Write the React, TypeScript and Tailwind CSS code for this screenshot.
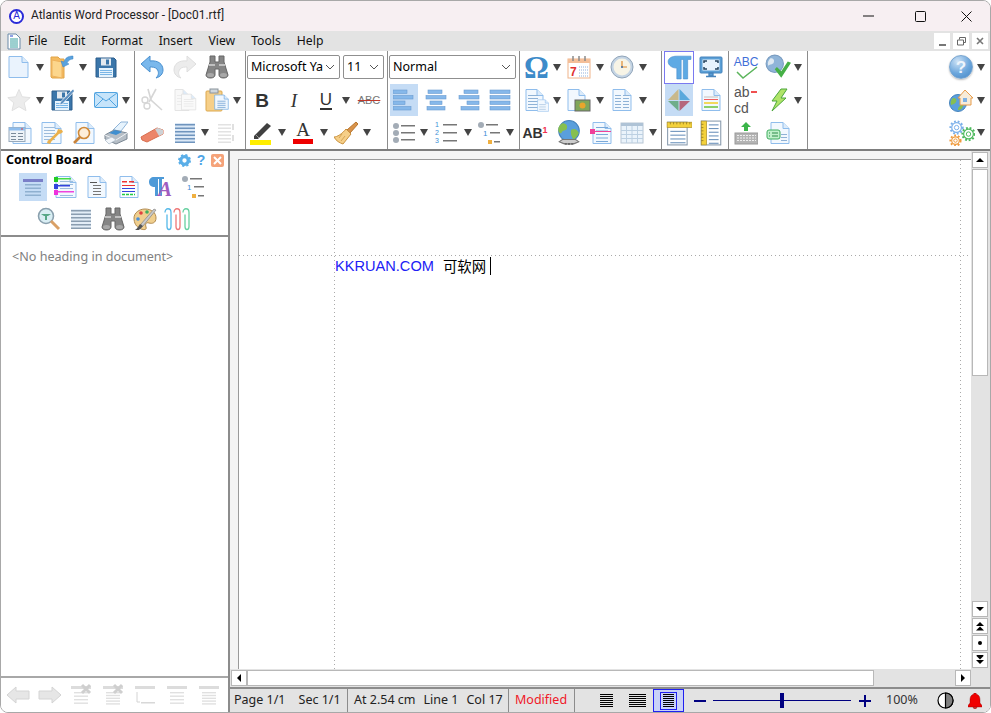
import type { ReactNode } from "react"

const font = "font-['Noto_Sans','Noto_Sans_CJK_SC',sans-serif]"

function Arrow({ className = "w-[8px]" }: { className?: string }) {
  return (
    <span className={`flex shrink-0 justify-center ${className}`}>
      <svg className="shrink-0" width="8" height="7" viewBox="0 0 8 7">
        <path d="M0 0h8L4 7z" fill="#444" />
      </svg>
    </span>
  )
}

function Slot({ className, children }: { className: string; children?: ReactNode }) {
  return <span className={`flex h-full shrink-0 items-center justify-center ${className}`}>{children}</span>
}

function Svg({ children, size = 24, box = 24 }: { children: ReactNode; size?: number; box?: number }) {
  return (
    <svg className="shrink-0" width={size} height={size} viewBox={`0 0 ${box} ${box}`} fill="none">
      {children}
    </svg>
  )
}

// sheet of paper with a folded corner, the base of most toolbar icons
function Sheet({ x = 4, w = 17, fill = "#f2f8fe", stroke = "#8fbdec", op = 1, children }: { x?: number; w?: number; fill?: string; stroke?: string; op?: number; children?: ReactNode }) {
  const r = x + w
  return (
    <g opacity={op}>
      <path d={`M${x} 1.500h${w - 6}l6 6v15h-${w}z`} fill={fill} stroke={stroke} />
      <path d={`M${r - 6} 1.500v6h6`} fill="#dcebfa" stroke={stroke} />
      {children}
    </g>
  )
}

function Lines({ x, y, w, n, gap = 3, color = "#8fb2d6", h = 1 }: { x: number; y: number; w: number; n: number; gap?: number; color?: string; h?: number }) {
  return (
    <>
      {Array.from({ length: n }).map((_, i) => (
        <rect key={i} x={x} y={y + i * gap} width={w} height={h} fill={color} />
      ))}
    </>
  )
}

const NewDoc = () => <Svg><Sheet x={2} w={19} fill="#eaf3fd" /></Svg>
const Folder = () => (
  <Svg>
    <path d="M1 2h7l2 2h4v19H2l-1-1z" fill="#f5bb60" stroke="#e0a548" />
    <path d="M2 5l10 2v16L2 21z" fill="#fcd68c" stroke="#eeb25c" />
    <path d="M23 1c-5 0-8 2-9 6l-3-1 2 6 6-3-2-1c1-2 3-4 6-4z" fill="#5aa2de" stroke="#3f85c0" strokeWidth=".5" />
  </Svg>
)
const Floppy = ({ pen = false }: { pen?: boolean }) => (
  <Svg>
    <path d="M2 3h18l2 2v17H2z" fill="#3b76aa" stroke="#2a5c8c" />
    <rect x="7" y="3.500" width="10" height="7" fill="#e4eaf0" />
    <rect x="12" y="4.500" width="3" height="5" fill="#3b76aa" />
    <rect x="5" y="13" width="14" height="9" fill="#e6f3fd" />
    <Lines x={6} y={15} w={12} n={3} gap={2} color="#79b5e6" />
    {pen && <path d="M23 1l1.500 2-12 13-3 1 1-3z" fill="#5c8fc0" stroke="#fff" strokeWidth=".7" />}
  </Svg>
)
const Star = () => (
  <Svg><path d="M12 1.500l3.200 7.300 8 .8-6 5.300 1.800 7.800-7-4-7 4 1.800-7.800-6-5.300 8-.8z" fill="#ececec" stroke="#e0e0e0" /></Svg>
)
const Mail = () => (
  <Svg>
    <rect x=".5" y="4.500" width="23" height="15" rx="1" fill="#c6e4fa" stroke="#52a4e0" />
    <path d="M1 5l11 8 11-8M1 19l8-8M23 19l-8-8" stroke="#52a4e0" fill="none" />
  </Svg>
)
const Preview = () => (
  <Svg>
    <Sheet x={5} w={18} />
    <rect x="1" y="6.500" width="16" height="14" fill="#eef3f8" stroke="#98aabb" />
    <rect x="1" y="6.500" width="16" height="3" fill="#8fbdec" />
    <rect x="13" y="7.500" width="2" height="1" fill="#e04040" />
    <Lines x={3} y={12} w={5} n={3} color="#7a8a9a" />
    <Lines x={10} y={12} w={5} n={3} color="#7a8a9a" />
  </Svg>
)
const DocTool = () => (
  <Svg>
    <Sheet x={2} w={19}><Lines x={4} y={6} w={11} n={5} color="#9dbcdc" /></Sheet>
    <path d="M19 11L9 21" stroke="#eab04c" strokeWidth="2.500" />
    <path d="M18 8l4 1 1 2-3 2-3-2zM10 23l-3-1 1-3 3 2z" fill="#eab04c" />
  </Svg>
)
const DocSearch = () => (
  <Svg>
    <Sheet x={4} w={18} />
    <circle cx="12" cy="12" r="5.500" fill="#fdeeda" stroke="#d08a3a" strokeWidth="1.600" />
    <path d="M8 16l-6 6" stroke="#c9833a" strokeWidth="2.600" />
  </Svg>
)
const Printer = () => (
  <Svg>
    <path d="M9 9l8-8h7l-7 9z" fill="#e6f3fd" stroke="#8fb4d8" />
    <path d="M1 14l9-5 13 3v6l-11 5-11-5z" fill="#b6bec6" stroke="#7c8894" />
    <path d="M1 14l11 5 11-7" stroke="#eef1f4" />
    <path d="M5 12l6-3 7 2-6 3z" fill="#3f8fd0" />
    <path d="M1 19l7-3 4 3-7 4z" fill="#f2f6fa" stroke="#a8b6c4" strokeWidth=".7" />
  </Svg>
)
const Undo = ({ gray = false }: { gray?: boolean }) => (
  <Svg>
    <path
      d="M1 9l9-8v5c8-1 13 3 13 9 0 4-3 7-7 8 3-3 3-6 1-9-2-2-5-2-7-2v5z"
      fill={gray ? "#ececec" : "#7ab8ec"}
      stroke={gray ? "#dedede" : "#4a90cf"}
      transform={gray ? "matrix(-1 0 0 1 24 0)" : undefined}
    />
  </Svg>
)
const Binoculars = () => (
  <Svg>
    <path d="M5 1h5v6h4V1h5v6l4 13c0 2-2 3-4.500 3S14 22 14 20v-6h-4v6c0 2-2 3-4.500 3S1 22 1 20L5 7z" fill="#858585" stroke="#666" />
    <path d="M4 10h6M14 10h6" stroke="#c0c0c0" strokeWidth="2" />
    <ellipse cx="5.500" cy="20" rx="3.500" ry="2" fill="#a8a8a8" />
    <ellipse cx="18.500" cy="20" rx="3.500" ry="2" fill="#a8a8a8" />
  </Svg>
)
const Scissors = () => (
  <Svg>
    <path d="M8 1l3 11 11 10" stroke="#d6d6d6" strokeWidth="1.600" />
    <path d="M16 1L9 14" stroke="#d6d6d6" strokeWidth="1.600" />
    <circle cx="5" cy="12" r="3" stroke="#d6d6d6" strokeWidth="1.400" />
    <circle cx="7" cy="18" r="3" stroke="#d6d6d6" strokeWidth="1.400" />
  </Svg>
)
const Copy = () => (
  <Svg>
    <Sheet x={2} w={14} fill="#f8f8f8" stroke="#e4e4e4"><Lines x={4} y={7} w={8} n={4} color="#ececec" /></Sheet>
    <g transform="translate(7 5) scale(.75)"><Sheet x={2} w={19} fill="#fafafa" stroke="#e0e0e0"><Lines x={5} y={8} w={13} n={4} color="#e6e6e6" /></Sheet></g>
  </Svg>
)
const Paste = () => (
  <Svg>
    <rect x="1" y="3" width="16" height="20" rx="1" fill="#f6cf88" stroke="#dca84e" />
    <rect x="5" y="1" width="8" height="4" fill="#cfd6dc" stroke="#8a949c" />
    <g transform="translate(9 6) scale(.68)"><Sheet x={1} w={20} fill="#f0f7fe" stroke="#6fa8e0"><Lines x={5} y={10} w={12} n={4} color="#5c93cb" /></Sheet></g>
  </Svg>
)
const Eraser = () => (
  <Svg>
    <path d="M1 16L17 7l6 2v4L7 21l-5-2z" fill="#ec8569" stroke="#d96f50" />
    <path d="M15 8l3-1 5 2v4l-4 2z" fill="#cdd2d6" />
  </Svg>
)
const LinesBlock = ({ c = "#6f94bd", bg = "#dbe8f6" }: { c?: string; bg?: string }) => (
  <Svg>
    <rect x="2" y="2" width="20" height="20" fill={bg} />
    <Lines x={2} y={3} w={20} n={6} gap={3.500} h={1.500} color={c} />
  </Svg>
)
const BlockDisabled = () => (
  <Svg>
    <Lines x={3} y={3} w={13} n={6} gap={3.500} h={1.500} color="#e2e2e2" />
    <path d="M18 3v6M18 14v6" stroke="#e0e0e0" strokeWidth="2" />
  </Svg>
)
const TextGlyph = ({ children, className }: { children: ReactNode; className: string }) => <span className={`leading-none ${className}`}>{children}</span>
const Pen = () => (
  <Svg>
    <path d="M4 15L17 2l4 3L8 18H4z" fill="#404040" />
    <path d="M5 13l4 4" stroke="#999" />
    <rect x="0" y="19" width="21" height="5" fill="#ffee00" />
  </Svg>
)
const ColorA = () => (
  <span className="flex flex-col items-center">
    <span className="font-['Liberation_Serif',serif] text-[19px] leading-[18px] text-[#333]">A</span>
    <span className="h-[5px] w-[20px] bg-[#ee0000]" />
  </span>
)
const Brush = () => (
  <Svg>
    <path d="M22 1l2 2-8 9-3-3z" fill="#d9934a" stroke="#b5752f" />
    <path d="M12 8l5 5-8 10c-3-1-7-3-9-7 3 0 8-3 12-8z" fill="#f6cf88" stroke="#c9923f" />
    <path d="M8 13l-3 4M11 15l-4 5" stroke="#c9923f" strokeWidth=".7" />
  </Svg>
)
const AlignIcon = ({ rows }: { rows: [number, number][] }) => (
  <svg className="shrink-0" width="22" height="24" viewBox="0 0 22 24">
    {rows.map(([x, w], i) => (
      <rect key={i} x={x} y={2 + i * 5.500} width={w} height={3.500} fill="#86b8ea" stroke="#6a9bd0" strokeWidth=".6" />
    ))}
  </svg>
)
const Bullets = () => (
  <Svg>
    {[5, 12, 19].map((y) => (
      <g key={y}>
        <circle cx="4" cy={y} r="3" fill="#a3acb6" />
        <rect x="9" y={y - 1} width="14" height="1.500" fill="#777" />
      </g>
    ))}
  </Svg>
)
const Numbered = () => (
  <Svg>
    {[3, 11, 19].map((y, i) => (
      <g key={y}>
        <text x="1" y={y + 2.500} fontSize="7" fill="#3d8fd6" fontFamily="Liberation Sans">{i + 1}</text>
        <rect x="9" y={y} width="14" height="1.500" fill="#777" />
      </g>
    ))}
  </Svg>
)
const MultiList = () => (
  <Svg>
    <circle cx="4" cy="4" r="3" fill="#a3acb6" />
    <rect x="9" y="3" width="12" height="1.500" fill="#777" />
    <text x="6" y="15" fontSize="8" fill="#3d8fd6" fontFamily="Liberation Sans">1</text>
    <rect x="13" y="11" width="10" height="1.500" fill="#777" />
    <rect x="11" y="19" width="4" height="4" fill="#f0b040" />
    <rect x="17" y="20" width="6" height="1.500" fill="#777" />
  </Svg>
)
const Calendar = () => (
  <Svg>
    <rect x="1" y="4" width="22" height="19" fill="#fff" stroke="#efb48a" />
    <rect x="1" y="4" width="22" height="4" fill="#f4bf99" />
    <path d="M6 1v5M12 1v5M18 1v5" stroke="#8a8a8a" strokeWidth="1.500" />
    <text x="3" y="21" fontSize="12" fontWeight="700" fill="#e03030" fontFamily="Liberation Sans">7</text>
    <path d="M12 12h9M12 15h9M12 18h9M12 21h9" stroke="#8fb0dc" strokeDasharray="1 1" />
  </Svg>
)
const Clock = () => (
  <Svg>
    <circle cx="12" cy="12" r="11" fill="#c4d4e4" stroke="#90a4b8" />
    <circle cx="12" cy="12" r="8.500" fill="#f7f4e6" />
    <path d="M12 6v6h5" stroke="#e08a30" strokeWidth="1.200" />
    <circle cx="12" cy="12" r="1" fill="#3d6fa8" />
  </Svg>
)
const DocCopy = () => (
  <Svg>
    <Sheet x={1} w={17}><Lines x={3} y={7} w={10} n={5} /></Sheet>
    <g transform="translate(12 11) scale(.55)"><Sheet x={1} w={20}><Lines x={4} y={10} w={12} n={3} gap={4} /></Sheet></g>
  </Svg>
)
const DocPicture = () => (
  <Svg>
    <Sheet x={1} w={17} />
    <rect x="8" y="12" width="15" height="11" fill="#7fa65a" stroke="#666" />
    <circle cx="15.500" cy="17.500" r="3" fill="#e8a52c" />
  </Svg>
)
const DocColumns = () => (
  <Svg>
    <Sheet x={3} w={18}>
      <Lines x={5} y={7} w={6} n={5} />
      <Lines x={13} y={7} w={6} n={5} />
    </Sheet>
  </Svg>
)
const Globe = () => (
  <Svg size={26}>
    <circle cx="12" cy="10" r="9.500" fill="#5a9fdc" stroke="#4684bc" />
    <path d="M6 3c3 0 5 2 4 5-1 2-4 1-5 4-1 1-3-1-3-3 0-3 2-5 4-6zM14 9c3-2 6 0 7 3-1 3-3 5-5 6-1-2-3-5-2-9z" fill="#86bf50" />
    <path d="M3 20c5 3 13 3 18 0l-3-2H6z" fill="#ccc" stroke="#777" />
    <path d="M8 22h8" stroke="#666" strokeWidth="1.500" strokeDasharray="2 1" />
  </Svg>
)
const BreakDoc = () => (
  <Svg>
    <Sheet x={4} w={18}><Lines x={7} y={6} w={12} n={5} gap={3.500} color="#7aa9d8" /></Sheet>
    <rect x="1" y="8" width="5" height="5" fill="#f0409a" />
    <rect x="5" y="10" width="17" height="1" fill="#f0409a" />
  </Svg>
)
const TableIcon = () => (
  <Svg>
    <rect x="1" y="2" width="22" height="20" fill="#eaf3fb" stroke="#b8c6d4" />
    <rect x="1" y="2" width="22" height="3" fill="#afc3d6" />
    <path d="M1 9.500h22M1 13.500h22M1 17.500h22M6.500 5v17M12 5v17M17.500 5v17" stroke="#bcd0e2" />
  </Svg>
)
const Pilcrow = () => (
  <Svg size={26}>
    <path d="M10 2h13v3h-3v18h-4V5h-2v18h-4V13c-5 0-8-3-8-6s3-5 8-5z" fill="#5eaae4" stroke="#4a90cf" strokeWidth=".6" />
  </Svg>
)
const Screen = () => (
  <Svg>
    <rect x="1" y="2" width="22" height="16" rx="1" fill="#5a9fd6" stroke="#4684bc" />
    <rect x="3.500" y="4.500" width="17" height="11" fill="#e8f3fc" />
    <path d="M5 8V6h3M16 6h3v2M19 12v2h-3M8 14H5v-2" stroke="#26445e" strokeWidth="1.500" />
    <path d="M10 18h4v3h-4zM7 21.500h10" stroke="#4684bc" strokeWidth="1.300" fill="#5a9fd6" />
  </Svg>
)
const Diamond = () => (
  <Svg>
    <path d="M11.500 1v11H1z" fill="#c9b98c" />
    <path d="M12.500 1v11H23z" fill="#5aa8dc" />
    <path d="M1 13h10.500v10z" fill="#6fae8a" />
    <path d="M23 13H12.500v10z" fill="#b5667d" />
  </Svg>
)
const DocHighlight = () => (
  <Svg>
    <Sheet x={3} w={18}>
      <rect x="5" y="8" width="14" height="2" fill="#dcdcdc" />
      <rect x="5" y="11" width="14" height="1" fill="#f06060" />
      <rect x="5" y="14" width="14" height="2" fill="#f2d95c" />
      <rect x="5" y="18" width="14" height="2" fill="#8bd06a" />
    </Sheet>
  </Svg>
)
const RulerTop = () => (
  <Svg size={26}>
    <rect x="1.500" y="2" width="18" height="21" fill="#fff" stroke="#8a9cae" />
    <Lines x={4} y={10} w={14} n={4} gap={3.500} color="#6d93bc" />
    <rect x="1" y="2" width="23" height="5" fill="#f3d13c" stroke="#a88d2a" strokeWidth=".6" />
    <path d="M4 2v2M7 2v2M10 2v2M13 2v2M16 2v2M19 2v2M22 2v2" stroke="#8a7220" strokeWidth=".7" />
  </Svg>
)
const RulerSide = () => (
  <Svg size={26}>
    <rect x="3" y="1" width="18" height="22" fill="#fff" stroke="#8a9cae" />
    <Lines x={10} y={4} w={9} n={6} gap={3.400} color="#6d93bc" />
    <rect x="3" y="1" width="5" height="22" fill="#f3d13c" stroke="#a88d2a" strokeWidth=".6" />
    <path d="M3 4h2M3 7h2M3 10h2M3 13h2M3 16h2M3 19h2" stroke="#8a7220" strokeWidth=".7" />
  </Svg>
)
const Spell = () => (
  <span className="relative flex h-[24px] w-[24px] justify-center">
    <span className="font-['Liberation_Sans',sans-serif] text-[12px] leading-[14px] text-[#3f6fd8]">ABC</span>
    <svg className="absolute bottom-0 left-[2px]" width="22" height="13" viewBox="0 0 22 13" fill="none">
      <path d="M1 6l6 6L21 1" stroke="#5bb55b" strokeWidth="1.500" />
    </svg>
  </span>
)
const WebCheck = () => (
  <Svg size={26}>
    <circle cx="9" cy="9" r="8" fill="#8fb4d8" stroke="#7a9cc0" />
    <path d="M5 4c3 0 4 2 3 4s-4 1-5 3c-1-3 0-5 2-7z" fill="#dfe9f2" />
    <path d="M9 14l6 8L24 8l-3-1-6 9-4-4z" fill="#46b046" />
  </Svg>
)
const Hyphen = () => (
  <span className="flex w-[24px] flex-col font-['Liberation_Sans',sans-serif] text-[14px] leading-[16px] text-[#555]">
    <span className="flex items-center">ab<span className="ml-[1px] h-[2px] w-[6px] bg-[#f05050]" /></span>
    <span>cd</span>
  </span>
)
const Bolt = () => (
  <Svg>
    <path d="M15 1h6l-6 9h5L6 23l5-10H6z" fill="#b0e468" stroke="#4ca63c" />
  </Svg>
)
const Keyboard = () => (
  <Svg>
    <path d="M12 1l5 5h-3v4h-4V6H7z" fill="#3cb54a" />
    <rect x="1" y="12" width="23" height="11" fill="#b4b4b4" stroke="#9a9a9a" />
    {[14.500, 17, 19.500].map((y) => <path key={y} d="M3 0h19" transform={`translate(0 ${y})`} stroke="#eee" strokeDasharray="2 1" />)}
  </Svg>
)
const DocCard = () => (
  <Svg>
    <Sheet x={5} w={18}><Lines x={15} y={13} w={6} n={3} /></Sheet>
    <rect x="1" y="9" width="13" height="9" rx="2" fill="#c0f0ca" stroke="#3fae5e" />
    <path d="M3 12h1M3 15h1M6 12h6M6 15h6" stroke="#2c8a48" />
  </Svg>
)
const Help = () => (
  <span className="flex h-[24px] w-[24px] items-center justify-center rounded-full border border-[#7aa6d0] bg-[radial-gradient(circle_at_35%_25%,#cfe3f6,#6ba6dc_55%,#4384c4)] font-['Liberation_Sans',sans-serif] text-[17px] font-bold leading-none text-[#eef5fc] shadow-[0_1px_2px_#bbb]">?</span>
)
const HomeGlobe = () => (
  <Svg>
    <circle cx="9" cy="15" r="8.500" fill="#5a9fdc" stroke="#4684bc" />
    <path d="M4 10c3 0 4 2 3 4s-3 2-5 3c-1-3 0-5 2-7zM9 22c0-3 2-5 5-5 0 3-2 5-5 5z" fill="#86bf50" />
    <path d="M9 10l7-8 8 8h-2v7H11v-7z" fill="#f7ecd9" stroke="#e79c4a" />
    <rect x="14" y="10" width="4" height="4" fill="#7fb2e5" />
  </Svg>
)
const Gear = ({ cx, cy, r, c }: { cx: number; cy: number; r: number; c: string }) => (
  <g>
    <circle cx={cx} cy={cy} r={r + 1.200} stroke={c} strokeWidth="1.800" strokeDasharray="1.700 1.700" />
    <circle cx={cx} cy={cy} r={r} stroke={c} strokeWidth="1.100" fill="#fff" />
    <circle cx={cx} cy={cy} r={r * 0.45} stroke={c} strokeWidth=".9" fill="#fff" />
  </g>
)
const Gears = () => (
  <Svg size={26}>
    <Gear cx={7} cy={7} r={4.500} c="#7cb0ea" />
    <Gear cx={18} cy={13} r={4.500} c="#4cb85c" />
    <Gear cx={6} cy={19} r={3.500} c="#ef9a3c" />
  </Svg>
)

// control board icons
const PanelLines = () => (
  <Svg>
    <rect x="2" y="4" width="20" height="3" fill="#7a7fc8" />
    <Lines x={4} y={9} w={16} n={4} gap={3.500} h={1.500} color="#8fb0d0" />
  </Svg>
)
const ColorHeads = () => (
  <Svg>
    <Sheet x={3} w={20}>
      <rect x="1" y="3" width="17" height="1.500" fill="#44dd44" />
      <rect x="1" y="2" width="4" height="5" fill="#22cc22" />
      <rect x="1" y="10" width="16" height="1.500" fill="#3344dd" />
      <rect x="1" y="9" width="4" height="5" fill="#3344dd" />
      <rect x="1" y="16" width="20" height="1.500" fill="#ee44dd" />
      <rect x="1" y="15" width="4" height="5" fill="#ee33dd" />
      <Lines x={7} y={6} w={13} n={2} color="#9dbcdc" />
      <Lines x={7} y={13} w={13} n={1} color="#9dbcdc" />
      <Lines x={7} y={20} w={13} n={1} color="#9dbcdc" />
    </Sheet>
  </Svg>
)
const DocOutline = () => (
  <Svg>
    <Sheet x={3} w={18}>
      <Lines x={5} y={7} w={7} n={1} color="#555" />
      <Lines x={8} y={10} w={8} n={4} gap={3} color="#777" />
    </Sheet>
  </Svg>
)
const DocColor = () => (
  <Svg>
    <Sheet x={3} w={18} fill="#fafcff">
      <rect x="5" y="6" width="5" height="1.500" fill="#ee3333" />
      <rect x="12" y="6" width="5" height="1.500" fill="#ee3333" />
      <rect x="5" y="10" width="13" height="1" fill="#ee3333" />
      <rect x="5" y="13" width="13" height="1" fill="#3344dd" />
      <rect x="5" y="16" width="13" height="1" fill="#3344dd" />
      <path d="M5 19.500h13" stroke="#22cc44" strokeWidth="1.500" strokeDasharray="3 1" />
    </Sheet>
  </Svg>
)
const StyleA = () => (
  <span className="relative flex h-[24px] w-[24px] items-center justify-center">
    <svg className="absolute left-0 top-[1px]" width="16" height="22" viewBox="0 0 16 22">
      <path d="M5 1h10v2h-2v17h-3V3H9v17H6V11C2 11 0 9 0 6s2-5 5-5z" fill="#4d9ad8" />
    </svg>
    <span className="relative left-[4px] top-[2px] font-['Liberation_Serif',serif] text-[21px] font-bold italic leading-none text-[#a05cc0]">A</span>
  </span>
)
const MagnifyHead = () => (
  <Svg>
    <circle cx="9" cy="9" r="7.500" fill="#d9eef4" stroke="#8aa0ae" strokeWidth="1.600" />
    <path d="M4 7h10l-3 2H7zM8 9h2v4H8z" fill="#58a888" />
    <path d="M14 14l8 8" stroke="#d9a066" strokeWidth="3" />
  </Svg>
)
const Palette = () => (
  <Svg>
    <path d="M12 2c7 0 11 4 11 9s-4 6-7 5-4 1-3 4-2 3-5 2C3 20 1 16 1 11S6 2 12 2z" fill="#f0cf8e" stroke="#b08a50" />
    <circle cx="8" cy="6" r="1.800" fill="#e04040" />
    <circle cx="14" cy="5" r="1.800" fill="#3fae5e" />
    <circle cx="5" cy="12" r="1.800" fill="#4a8fd8" />
    <path d="M23 3L10 19l-3 3 1-5L21 2z" fill="#c9c9c9" stroke="#777" strokeWidth=".6" />
    <path d="M7 17l3 2-4 4H2c2-1 3-3 5-6z" fill="#555" />
  </Svg>
)
const Clips = () => (
  <svg className="shrink-0" width="26" height="24" viewBox="0 0 26 24" fill="none" strokeWidth="1.300">
    {[
      { c: "#55b8e8", x: 1 },
      { c: "#ee7777", x: 10 },
      { c: "#66d0a0", x: 19 },
    ].map(({ c, x }) => (
      <path key={x} d={`M${x} 5c0-5 6-5 6 0v14c0 4-4 4-4 0V7`} stroke={c} transform="translate(0 .5)" />
    ))}
  </svg>
)

// grey arrows and heading tools of the bottom strip
const BigArrow = ({ flip = false }: { flip?: boolean }) => (
  <svg className="shrink-0" width="24" height="20" viewBox="0 0 24 20">
    <path d="M1 10l9-8v4h13v8H10v4z" fill="#e6e6e6" stroke="#d4d4d4" transform={flip ? "matrix(-1 0 0 1 24 0)" : undefined} />
  </svg>
)
const GrayHead = ({ x = false, fat = false, hook = false }: { x?: boolean; fat?: boolean; hook?: boolean }) => (
  <Svg>
    <rect x="1" y="3" width="20" height="3" fill="#dcdcdc" />
    {hook ? (
      <>
        <path d="M3 9v10h3" stroke="#d4d4d4" fill="none" />
        <rect x="7" y="19" width="14" height="1.500" fill="#d8d8d8" />
      </>
    ) : (
      <Lines x={4} y={9} w={14} n={fat ? 5 : 4} gap={fat ? 2.800 : 3.500} h={1.400} color="#e0e0e0" />
    )}
    {x && <path d="M12 2l8 8M20 2l-8 8" stroke="#cfcfcf" strokeWidth="3" />}
  </Svg>
)

function ScrollButton({ children, className = "h-[16px] w-[16px]" }: { children: ReactNode; className?: string }) {
  return <span className={`flex shrink-0 items-center justify-center border border-[#b8b8b8] bg-white ${className}`}>{children}</span>
}

const Tri = ({ up = false, dir }: { up?: boolean; dir?: "l" | "r" }) => (
  <svg width="8" height="8" viewBox="0 0 8 8">
    <path d={dir === "l" ? "M6 0v8L2 4z" : dir === "r" ? "M2 0v8l4-4z" : up ? "M0 6h8L4 2z" : "M0 2h8L4 6z"} fill="#000" />
  </svg>
)
const DoubleTri = ({ up = false }: { up?: boolean }) => (
  <svg width="8" height="10" viewBox="0 0 8 10">
    <path d={up ? "M0 5h8L4 1zM0 9.500h8L4 5.500z M1 9h6v1H1z" : "M0 5h8L4 9zM0 .5h8L4 4.500z M1 0h6v1H1z"} fill="#000" />
  </svg>
)

function ToolGroup({ className, children }: { className: string; children: ReactNode }) {
  return <div className={`flex shrink-0 flex-col border-r border-[#8c8c8c] ${className}`}>{children}</div>
}

function Row({ children, className = "" }: { children: ReactNode; className?: string }) {
  return <div className={`flex h-[33px] items-center ${className}`}>{children}</div>
}

function Combo({ value, className }: { value: string; className: string }) {
  return (
    <span className={`flex h-[24px] shrink-0 items-center justify-between overflow-hidden rounded-[2px] border border-[#8f8f8f] bg-white pl-[3px] pr-[4px] text-[12.500px] text-black ${className}`}>
      <span className="overflow-hidden whitespace-nowrap">{value}</span>
      <svg className="shrink-0 bg-white" width="10" height="6" viewBox="0 0 10 6" fill="none">
        <path d="M1 1l4 4 4-4" stroke="#555" />
      </svg>
    </span>
  )
}

function Toolbar() {
  return (
    <div className="flex h-[100px] shrink-0 border-b-2 border-[#7d7d7d] bg-white">
      <ToolGroup className="w-[134px] pl-[1px]">
        <Row>
          <Slot className="w-[34px]"><NewDoc /></Slot><Arrow />
          <Slot className="ml-[1px] w-[34px]"><Folder /></Slot><Arrow />
          <Slot className="w-[38px]"><Floppy /></Slot>
        </Row>
        <Row>
          <Slot className="w-[34px]"><Star /></Slot><Arrow />
          <Slot className="ml-[1px] w-[34px]"><Floppy pen /></Slot><Arrow />
          <Slot className="w-[38px]"><Mail /></Slot><Arrow className="-ml-[3px] w-[8px]" />
        </Row>
        <Row className="h-[32px]">
          <Slot className="w-[35px]"><Preview /></Slot>
          <Slot className="w-[30px]"><DocTool /></Slot>
          <Slot className="w-[34px]"><DocSearch /></Slot>
          <Slot className="w-[30px]"><Printer /></Slot>
        </Row>
      </ToolGroup>

      <ToolGroup className="w-[111px]">
        <Row>
          <Slot className="w-[34px]"><Undo /></Slot>
          <Slot className="w-[32px]"><Undo gray /></Slot>
          <Slot className="w-[31px]"><Binoculars /></Slot>
        </Row>
        <Row>
          <Slot className="w-[34px]"><Scissors /></Slot>
          <Slot className="w-[32px]"><Copy /></Slot>
          <Slot className="w-[31px]"><Paste /></Slot><Arrow className="w-[9px]" />
        </Row>
        <Row className="h-[32px]">
          <Slot className="w-[34px]"><Eraser /></Slot>
          <Slot className="w-[32px]"><LinesBlock /></Slot>
          <Arrow />
          <Slot className="w-[36px]"><BlockDisabled /></Slot>
        </Row>
      </ToolGroup>

      <ToolGroup className="w-[142px] pl-[1px]">
        <Row className="gap-[3px]">
          <Combo value="Microsoft Ya" className="w-[93px]" />
          <Combo value="11" className="w-[41px]" />
        </Row>
        <Row>
          <Slot className="w-[30px]"><TextGlyph className="font-['Liberation_Sans',sans-serif] text-[19px] font-bold text-[#333]">B</TextGlyph></Slot>
          <Slot className="w-[34px]"><TextGlyph className="font-['Liberation_Serif',serif] text-[19px] italic text-[#333]">I</TextGlyph></Slot>
          <Slot className="w-[30px]"><TextGlyph className="border-b-2 border-[#333] font-['Liberation_Sans',sans-serif] text-[17px] text-[#333]">U</TextGlyph></Slot>
          <Arrow className="w-[10px]" />
          <Slot className="w-[36px]"><TextGlyph className="font-['Liberation_Sans',sans-serif] text-[11px] text-[#777] line-through decoration-[#c0392b]">ABC</TextGlyph></Slot>
        </Row>
        <Row className="h-[32px]">
          <Slot className="w-[30px]"><Pen /></Slot><Arrow className="w-[10px]" />
          <Slot className="w-[32px]"><ColorA /></Slot><Arrow className="w-[10px]" />
          <Slot className="w-[33px]"><Brush /></Slot><Arrow className="w-[10px]" />
        </Row>
      </ToolGroup>

      <ToolGroup className="w-[132px]">
        <Row className="pl-[1px]"><Combo value="Normal" className="w-[127px]" /></Row>
        <Row>
          <Slot className="ml-[2px] h-[28px] w-[28px] bg-[#c5dcf5]"><AlignIcon rows={[[0, 14], [0, 20], [0, 12], [0, 18]]} /></Slot>
          <Slot className="w-[36px]"><AlignIcon rows={[[3, 14], [1, 20], [5, 12], [2, 18]]} /></Slot>
          <Slot className="w-[30px]"><AlignIcon rows={[[6, 14], [1, 20], [9, 12], [3, 18]]} /></Slot>
          <Slot className="w-[32px]"><AlignIcon rows={[[1, 20], [1, 20], [1, 20], [1, 20]]} /></Slot>
        </Row>
        <Row className="h-[32px]">
          <Slot className="w-[32px]"><Bullets /></Slot><Arrow />
          <Slot className="w-[36px]"><Numbered /></Slot><Arrow className="w-[7px]" />
          <Slot className="w-[36px]"><MultiList /></Slot><Arrow className="w-[6px]" />
        </Row>
      </ToolGroup>

      <ToolGroup className="w-[142px]">
        <Row>
          <Slot className="w-[33px]"><TextGlyph className="font-['Liberation_Serif',serif] text-[31px] font-bold text-[#3d8bc9]">Ω</TextGlyph></Slot><Arrow />
          <Slot className="w-[35px]"><Calendar /></Slot><Arrow />
          <Slot className="w-[35px]"><Clock /></Slot><Arrow />
        </Row>
        <Row>
          <Slot className="w-[33px]"><DocCopy /></Slot><Arrow />
          <Slot className="w-[35px]"><DocPicture /></Slot><Arrow />
          <Slot className="w-[35px]"><DocColumns /></Slot><Arrow />
        </Row>
        <Row className="h-[32px]">
          <Slot className="w-[30px]">
            <span className="flex items-start font-['Liberation_Sans',sans-serif] font-bold leading-none text-[#333]">
              <span className="text-[14px]">AB</span><span className="text-[9px] text-[#f03050]">1</span>
            </span>
          </Slot>
          <Slot className="w-[38px]"><Globe /></Slot>
          <Slot className="w-[26px]"><BreakDoc /></Slot>
          <Slot className="w-[35px]"><TableIcon /></Slot><Arrow />
        </Row>
      </ToolGroup>

      <ToolGroup className="w-[67px] pl-[2px]">
        <Row><Slot className="h-[30px] w-[30px] border border-[#7a7af0]"><Pilcrow /></Slot><Slot className="w-[34px]"><Screen /></Slot></Row>
        <Row><Slot className="ml-[1px] h-[28px] w-[28px] bg-[#c5dcf5]"><Diamond /></Slot><Slot className="ml-[1px] w-[34px]"><DocHighlight /></Slot></Row>
        <Row className="h-[32px]"><Slot className="w-[30px]"><RulerTop /></Slot><Slot className="w-[34px]"><RulerSide /></Slot></Row>
      </ToolGroup>

      <ToolGroup className="w-[79px]">
        <Row><Slot className="w-[34px]"><Spell /></Slot><Slot className="w-[30px]"><WebCheck /></Slot><Arrow className="w-[10px]" /></Row>
        <Row><Slot className="w-[34px]"><Hyphen /></Slot><Slot className="w-[30px]"><Bolt /></Slot><Arrow className="w-[10px]" /></Row>
        <Row className="h-[32px]"><Slot className="w-[34px]"><Keyboard /></Slot><Slot className="w-[30px]"><DocCard /></Slot></Row>
      </ToolGroup>

      <div className="flex flex-1 flex-col items-end pr-[4px]">
        <Row><Help /><Arrow className="ml-[3px] w-[10px]" /></Row>
        <Row><HomeGlobe /><Arrow className="ml-[3px] w-[10px]" /></Row>
        <Row className="h-[32px]"><Gears /><Arrow className="ml-[1px] w-[10px]" /></Row>
      </div>
    </div>
  )
}

function ControlBoard() {
  return (
    <aside className="flex w-[229px] shrink-0 flex-col border-r-2 border-[#8c8c8c] bg-white">
      <div className="flex h-[17px] items-center justify-between pl-[5px] pr-[4px] pt-[1px]">
        <span className="text-[12.500px] font-bold text-black">Control Board</span>
        <span className="flex items-center gap-[4px]">
          <svg width="13" height="13" viewBox="0 0 24 24">
            <circle cx="12" cy="12" r="7" fill="none" stroke="#5aaee8" strokeWidth="6" />
            <circle cx="12" cy="12" r="10" fill="none" stroke="#5aaee8" strokeWidth="4" strokeDasharray="4 3.900" />
          </svg>
          <span className="w-[12px] text-center font-['Liberation_Sans',sans-serif] text-[14px] font-bold leading-none text-[#4fa5e6]">?</span>
          <svg width="13" height="13" viewBox="0 0 13 13">
            <rect width="13" height="13" rx="2" fill="#f5a37a" />
            <path d="M3 3l7 7M10 3l-7 7" stroke="#fff" strokeWidth="2" />
          </svg>
        </span>
      </div>
      <div className="flex h-[33px] items-center pl-[18px] pt-[5px]">
        <Slot className="h-[28px] w-[28px] bg-[#c5dcf5]"><PanelLines /></Slot>
        <Slot className="ml-[2px] w-[32px]"><ColorHeads /></Slot>
        <Slot className="w-[32px]"><DocOutline /></Slot>
        <Slot className="w-[32px]"><DocColor /></Slot>
        <Slot className="w-[32px]"><StyleA /></Slot>
        <Slot className="w-[32px]"><MultiList /></Slot>
      </div>
      <div className="flex h-[36px] items-center border-b-2 border-[#8c8c8c] pl-[32px] pt-[2px]">
        <Slot className="w-[32px]"><MagnifyHead /></Slot>
        <Slot className="w-[32px]"><LinesBlock c="#8a9db0" bg="#e3edf7" /></Slot>
        <Slot className="w-[32px]"><Binoculars /></Slot>
        <Slot className="w-[32px]"><Palette /></Slot>
        <Slot className="w-[32px]"><Clips /></Slot>
      </div>
      <p className="flex-1 pl-[11px] pt-[11px] text-[12.600px] leading-[18px] text-[#808080]">&lt;No heading in document&gt;</p>
      <div className="flex h-[36px] items-center border-t-2 border-[#a8a8a8] pl-[1px]">
        <Slot className="w-[32px]"><BigArrow /></Slot>
        <Slot className="w-[32px]"><BigArrow flip /></Slot>
        <Slot className="w-[32px]"><GrayHead x /></Slot>
        <Slot className="w-[32px]"><GrayHead x fat /></Slot>
        <Slot className="w-[32px]"><GrayHead hook /></Slot>
        <Slot className="w-[32px]"><GrayHead /></Slot>
        <Slot className="w-[32px]"><GrayHead fat /></Slot>
      </div>
    </aside>
  )
}

const DotV = () => <div className="bg-[repeating-linear-gradient(to_bottom,#aaa_0,#aaa_1px,transparent_1px,transparent_4px)]" />

function Page() {
  return (
    <div className="min-h-0 flex-1 pl-[8px] pt-[8px]">
      <div className="grid h-full grid-cols-[95px_1px_1fr_1px_10px] grid-rows-[95px_1px_1fr] border-l border-t border-[#9a9a9a] bg-white">
        <div />
        <DotV />
        <div />
        <DotV />
        <div />
        <div className="col-span-5 bg-[repeating-linear-gradient(to_right,#aaa_0,#aaa_1px,transparent_1px,transparent_4px)]" />
        <div />
        <DotV />
        <div className="flex items-start text-[14.600px] leading-[20px]">
          <span className="font-['Liberation_Sans',sans-serif] text-[#2020f5]">KKRUAN.COM</span>
          <span className="ml-[9px] font-['Noto_Sans_CJK_SC',sans-serif] text-[14.400px] text-black">可软网</span>
          <span className="ml-[4px] mt-[1px] h-[18px] w-[1px] bg-black" />
        </div>
        <DotV />
        <div />
      </div>
    </div>
  )
}

function Editor() {
  return (
    <main className="flex min-w-0 flex-1 flex-col bg-[#f4f4f4]">
      <div className="flex min-h-0 flex-1">
        <div className="flex min-w-0 flex-1 flex-col">
          <Page />
          <div className="flex h-[18px] items-center bg-[#e3e3e3] pl-[1px]">
            <ScrollButton><Tri dir="l" /></ScrollButton>
            <span className="h-[16px] w-[627px] border border-[#b8b8b8] bg-white" />
            <span className="flex-1" />
            <ScrollButton><Tri dir="r" /></ScrollButton>
          </div>
        </div>
        <div className="flex w-[19px] shrink-0 flex-col gap-[1px] bg-[#e3e3e3] pl-[1px] pt-[1px]">
          <ScrollButton><Tri up /></ScrollButton>
          <span className="h-[207px] w-[16px] border border-[#b8b8b8] bg-white" />
          <span className="flex-1" />
          <ScrollButton><Tri /></ScrollButton>
          <ScrollButton><DoubleTri up /></ScrollButton>
          <ScrollButton><span className="h-[4px] w-[4px] rounded-full bg-black" /></ScrollButton>
          <ScrollButton><DoubleTri /></ScrollButton>
          <span className="h-[18px]" />
        </div>
      </div>
      <StatusBar />
    </main>
  )
}

const ViewLines = ({ w, n }: { w: number; n: number }) => (
  <span className="flex flex-col gap-[1px]">
    {Array.from({ length: n }).map((_, i) => <span key={i} className="h-[1px] bg-black" style={{ width: w }} />)}
  </span>
)

function StatusBar() {
  return (
    <footer className="flex h-[25px] shrink-0 items-center border-t-2 border-[#8c8c8c] bg-[#e3e3e3] text-[12.500px] text-[#222]">
      <span className="flex h-full w-[118px] items-center gap-[13px] border-r border-[#8c8c8c] pl-[4px]">
        <span>Page 1/1</span><span>Sec 1/1</span>
      </span>
      <span className="flex h-full w-[161px] items-center gap-[8px] border-r border-[#8c8c8c] pl-[6px]">
        <span>At 2.54 cm</span><span>Line 1</span><span>Col 17</span>
      </span>
      <span className="flex h-full w-[66px] items-center border-r border-[#8c8c8c] pl-[6px] text-[#f01828]">Modified</span>
      <Slot className="ml-[21px] w-[20px]"><ViewLines w={13} n={7} /></Slot>
      <Slot className="ml-[11px] w-[20px]"><ViewLines w={17} n={7} /></Slot>
      <Slot className="ml-[6px] h-[23px] w-[31px] border border-[#2020f0] bg-[#c9d2f8]">
        <span className="flex h-[18px] w-[17px] items-center justify-center border border-[#2020f0]"><ViewLines w={11} n={7} /></span>
      </Slot>
      <span className="ml-[10px] h-[2px] w-[12px] bg-[#000080]" />
      <span className="ml-[7px] flex h-full w-[138px] items-center justify-center bg-[linear-gradient(#000080,#000080)] bg-[length:100%_1px] bg-center bg-no-repeat">
        <span className="h-[15px] w-[4px] bg-[#000080]" />
      </span>
      <svg className="ml-[8px]" width="12" height="12" viewBox="0 0 12 12"><path d="M0 5h12v2H0zM5 0h2v12H5z" fill="#000080" /></svg>
      <span className="ml-[15px] w-[36px] text-[#333]">100%</span>
      <svg className="ml-[15px]" width="17" height="17" viewBox="0 0 17 17">
        <circle cx="8.500" cy="8.500" r="7.500" fill="#fff" stroke="#000" strokeWidth="1.200" />
        <path d="M8.500 1a7.500 7.500 0 0 1 0 15z" fill="#808080" stroke="#000" strokeWidth="1.200" />
      </svg>
      <svg className="ml-[14px]" width="14" height="16" viewBox="0 0 14 16">
        <path d="M7 0c1 0 1.500.6 1.500 1.300C11 2 12 4 12 7v3l2 2.500V14H0v-1.500L2 10V7c0-3 1-5 3.500-5.700C5.500.6 6 0 7 0zM5 14.500h4C9 16 5 16 5 14.500z" fill="#f00000" stroke="#800" strokeWidth=".4" />
      </svg>
    </footer>
  )
}

export default function App() {
  return (
    <div className={`flex h-[713px] w-[991px] flex-col overflow-hidden rounded-[8px] border border-[#a8a8a8] bg-white ${font}`}>
      <header className="flex h-[30px] shrink-0 items-center bg-[#f7eff2] pl-[8px]">
        <span className="flex h-[15px] w-[15px] items-center justify-center rounded-full border-2 border-[#2b2bd8] bg-white font-['Liberation_Sans',sans-serif] text-[10px] leading-none text-[#2b2bd8]">A</span>
        <span className="ml-[7px] flex-1 font-['Roboto',sans-serif] text-[11.900px] text-[#222]">Atlantis Word Processor - [Doc01.rtf]</span>
        <svg className="mr-[41px]" width="11" height="2" viewBox="0 0 11 2"><path d="M0 1h11" stroke="#111" /></svg>
        <svg className="mr-[35px]" width="11" height="11" viewBox="0 0 11 11" fill="none"><rect x=".5" y=".5" width="10" height="10" rx="1" stroke="#111" /></svg>
        <svg className="mr-[18px]" width="11" height="11" viewBox="0 0 11 11" fill="none"><path d="M.5.5l10 10M10.500.5l-10 10" stroke="#111" /></svg>
      </header>
      <nav className="flex h-[20px] shrink-0 items-center bg-[#e3e3e3] pl-[6px] text-[12.200px] text-[#111]">
        <svg width="14" height="17" viewBox="0 0 14 17" fill="none">
          <path d="M1 1h8l4 4v11H1z" fill="#fff" stroke="#6a8aa8" />
          <path d="M3 3h3" stroke="#2244cc" />
          <path d="M3 6h8M3 8h8M3 10h8M3 12h8M3 14h8" stroke="#38a0a0" />
        </svg>
        <span className="ml-[7px] flex flex-1 gap-[16px]">
          <span>File</span><span>Edit</span><span>Format</span><span>Insert</span><span>View</span><span>Tools</span><span>Help</span>
        </span>
        <span className="mr-[2px] flex gap-[3px]">
          <span className="flex h-[16px] w-[16px] items-end justify-center bg-white pb-[3px]"><span className="h-[2px] w-[7px] bg-[#777]" /></span>
          <span className="flex h-[16px] w-[16px] items-center justify-center bg-white">
            <svg width="9" height="9" viewBox="0 0 9 9" fill="none"><path d="M2.500 2.500v-2h6v5h-2M.5 3h6v5h-6z" stroke="#666" /></svg>
          </span>
          <span className="flex h-[16px] w-[16px] items-center justify-center bg-white">
            <svg width="8" height="8" viewBox="0 0 8 8" fill="none"><path d="M1 1l6 6M7 1L1 7" stroke="#777" strokeWidth="1.600" /></svg>
          </span>
        </span>
      </nav>
      <Toolbar />
      <div className="flex min-h-0 flex-1">
        <ControlBoard />
        <Editor />
      </div>
    </div>
  )
}
